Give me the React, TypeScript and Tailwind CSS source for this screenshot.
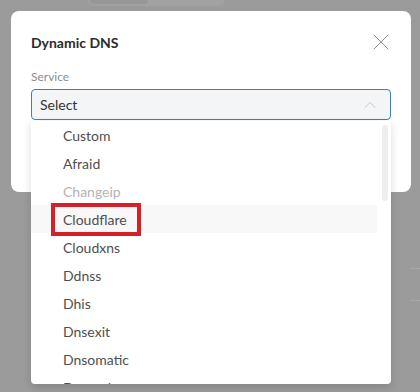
import { X, ChevronUp } from "lucide-react";

const SERVICES = [
  { name: "Custom" },
  { name: "Afraid" },
  { name: "Changeip", disabled: true },
  { name: "Cloudflare", hover: true, marked: true },
  { name: "Cloudxns" },
  { name: "Ddnss" },
  { name: "Dhis" },
  { name: "Dnsexit" },
  { name: "Dnsomatic" },
  { name: "Dnspod" },
];

export default function App() {
  return (
    <div className="relative w-[420px] h-[392px] overflow-hidden bg-[#9b9b9b] font-['Lato',sans-serif]">
      {/* page behind the overlay */}
      <div className="absolute left-[88px] top-[-10px] w-[137px] h-[16px] rounded-md bg-[#a1a1a1] flex p-[2px]">
        <div className="w-[58px] rounded bg-[#979799]" />
      </div>
      <div className="absolute right-0 top-[268px] w-[10px] h-px bg-[#a8a8a8]" />
      <div className="absolute right-0 top-[300px] w-[10px] h-px bg-[#a8a8a8]" />

      {/* modal */}
      <div className="absolute left-[11px] top-[11px] w-[400px] h-[181px] rounded-lg bg-white px-5 pt-[21px]">
        <div className="flex items-center justify-between h-5">
          <h2 className="text-[14px] font-bold text-[#2b2b2b]">Dynamic DNS</h2>
          <X className="w-7 h-7 text-[#8a8a8a] -mr-[4px]" strokeWidth={0.8} />
        </div>
        <div className="mt-[17px] text-[12px] leading-4 text-[#8c8c8c]">Service</div>
        <div className="relative mt-1">
          <div className="h-[31px] flex items-center justify-between rounded border border-[#3d7fc1] bg-[#f4f5f7] pl-2 pr-[10px]">
            <span className="text-[14px] text-[#333]">Select</span>
            <ChevronUp className="w-5 h-5 text-[#bdbdbd]" strokeWidth={1} />
          </div>

          {/* dropdown */}
          <div className="absolute left-0 top-[32px] w-[360px] h-[263px] rounded-b bg-white shadow-[0_3px_8px_rgba(0,0,0,0.15)] overflow-hidden">
            <div className="absolute right-[3px] top-[4px] w-[6px] h-[76px] rounded-full bg-[#eeeeee]" />
            <ul className="w-[346px]">
              {SERVICES.map((s) => (
                <li
                  key={s.name}
                  className={`relative h-7 flex items-center pl-8 text-[14px] ${
                    s.disabled ? "text-[#b3b3b3]" : "text-[#4f4f4f]"
                  } ${s.hover ? "bg-[#f8f8f8]" : ""}`}
                >
                  {s.name}
                  {s.marked && (
                    <span className="absolute left-[20px] top-[-2px] w-[90px] h-[33px] border-[4px] border-[#d71f27]" />
                  )}
                </li>
              ))}
            </ul>
          </div>
        </div>
      </div>
    </div>
  );
}
